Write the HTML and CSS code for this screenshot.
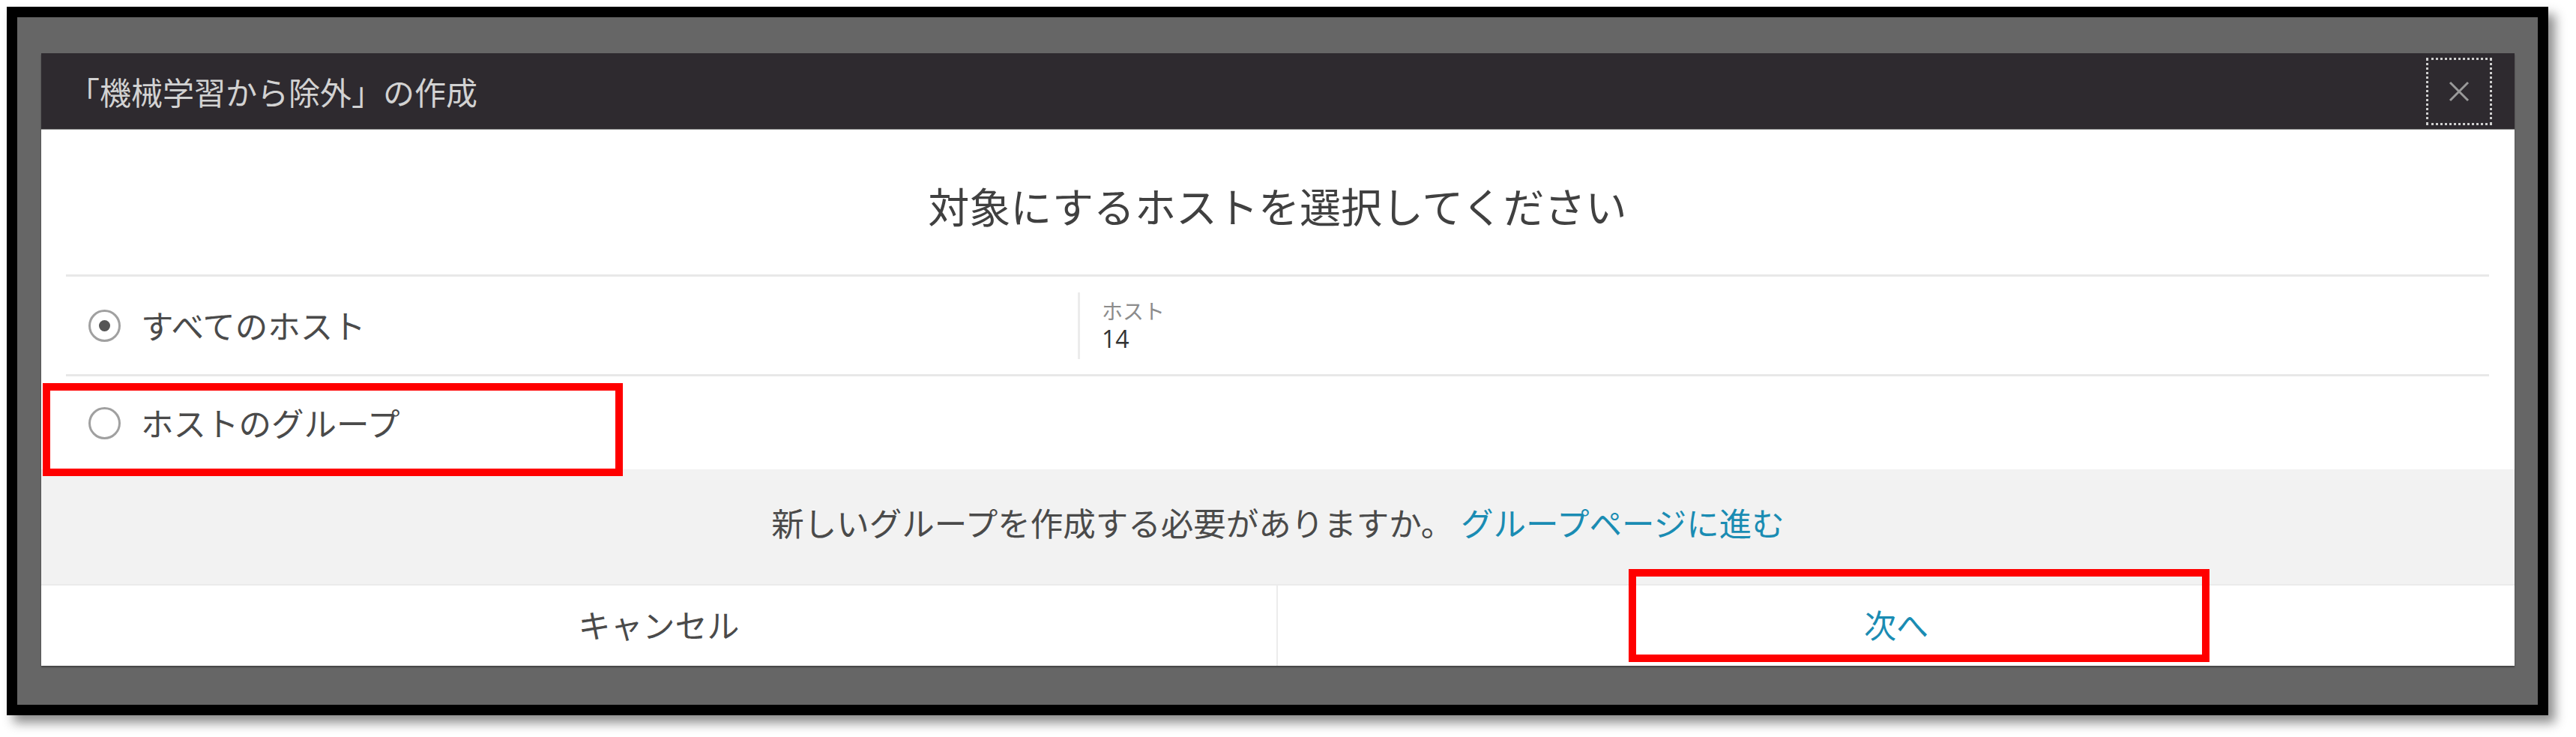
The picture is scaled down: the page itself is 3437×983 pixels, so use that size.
FILE: index.html
```html
<!DOCTYPE html>
<html lang="ja">
<head>
<meta charset="utf-8">
<title>「機械学習から除外」の作成</title>
<link rel="stylesheet" href="styles.css">
</head>
<body>
<div class="frame">
  <div class="dialog">
    <div class="header">
      <span class="title">「機械学習から除外」の作成</span>
      <button class="close" aria-label="閉じる">
        <svg width="30" height="30" viewBox="0 0 30 30"><path d="M3 3 L27 27 M27 3 L3 27" stroke="#9a9a9a" stroke-width="3" fill="none"/></svg>
      </button>
    </div>
    <div class="content">
      <div class="heading">対象にするホストを選択してください</div>
      <div class="options">
        <div class="option row-first">
          <div class="choice"><span class="radio checked"></span><span class="label">すべてのホスト</span></div>
          <div class="stat">
            <span class="stat-label">ホスト</span>
            <span class="stat-value">14</span>
          </div>
        </div>
        <div class="option">
          <div class="choice"><span class="radio"></span><span class="label">ホストのグループ</span></div>
        </div>
      </div>
    </div>
    <div class="notice">新しいグループを作成する必要がありますか。 <a class="link" href="#">グループページに進む</a></div>
    <div class="footer">
      <button class="btn cancel">キャンセル</button>
      <button class="btn next">次へ</button>
    </div>
  </div>
</div>
<div class="mark mark-group"></div>
<div class="mark mark-next"></div>
</body>
</html>
```
FILE: styles.css
```css
html, body {
  margin: 0;
  padding: 0;
  background: #ffffff;
}
body {
  position: relative;
  width: 3437px;
  height: 983px;
  overflow: hidden;
  font-family: "Noto Sans CJK JP", "Noto Sans", sans-serif;
}
.frame {
  box-sizing: border-box;
  margin: 9px 0 0 9px;
  width: 3391px;
  height: 945px;
  border: 14px solid #000;
  background: #666666;
  padding: 48px 31px 52px 32px;
  box-shadow: 9px 10px 14px rgba(0,0,0,0.45);
}
.dialog {
  width: 3300px;
  height: 817px;
  display: flex;
  flex-direction: column;
  background: #ffffff;
  box-shadow: 0 2px 2px rgba(0,0,0,0.35);
}
.header {
  height: 101px;
  flex: none;
  display: flex;
  align-items: center;
  justify-content: space-between;
  background: #2e2a2f;
  border-bottom: 1px solid #8a8a8a;
  padding-left: 36px;
  padding-right: 30px;
}
.title {
  color: #d2d2d2;
  font-size: 42px;
  line-height: 1;
}
.close {
  width: 88px;
  height: 90px;
  box-sizing: border-box;
  border: 3px dotted #cfcfcf;
  background: transparent;
  display: flex;
  align-items: center;
  justify-content: center;
  padding: 0;
  margin-top: 1px;
}
.content {
  flex: none;
  padding: 0 34px 0 33px;
}
.heading {
  height: 196px;
  display: flex;
  align-items: center;
  justify-content: center;
  font-size: 55px;
  color: #404040;
  border-bottom: 3px solid #e8e8e8;
  padding-top: 6px;
  box-sizing: border-box;
}
.option {
  display: grid;
  grid-template-columns: 1350px 1fr;
  align-items: center;
  height: 124px;
}
.row-first {
  height: 130px;
  border-bottom: 3px solid #e8e8e8;
}
.choice {
  display: flex;
  align-items: center;
  padding-left: 30px;
}
.radio {
  box-sizing: border-box;
  width: 43px;
  height: 43px;
  border: 3px solid #a0a0a0;
  border-radius: 50%;
  display: flex;
  align-items: center;
  justify-content: center;
  margin-right: 27px;
}
.radio.checked::after {
  content: "";
  width: 15px;
  height: 15px;
  border-radius: 50%;
  background: #555;
}
.label {
  font-size: 43.5px;
  color: #4a4a4a;
  line-height: 1;
}
.stat {
  display: flex;
  flex-direction: column;
  justify-content: center;
  height: 89px;
  border-left: 3px solid #ececec;
  padding-left: 29px;
  box-sizing: border-box;
}
.stat-label {
  font-size: 28px;
  color: #8c8c8c;
  line-height: 36px;
}
.stat-value {
  font-family: "Open Sans", "Noto Sans", sans-serif;
  font-size: 32px;
  color: #333;
  line-height: 40px;
}
.notice {
  flex: none;
  height: 153px;
  box-sizing: border-box;
  background: #f2f2f2;
  display: flex;
  align-items: center;
  justify-content: center;
  font-size: 43.5px;
  color: #4a4a4a;
  white-space: pre;
  padding-bottom: 12px;
}
.link {
  color: #1a8cb3;
  text-decoration: none;
}
.footer {
  flex: 1;
  display: grid;
  grid-template-columns: 1fr 1fr;
  border-top: 2px solid #ebebeb;
}
.btn {
  border: none;
  background: #ffffff;
  font-family: "Noto Sans CJK JP", "Noto Sans", sans-serif;
  font-size: 43px;
  padding: 0 0 6px;
  margin: 0;
}
.cancel {
  color: #4a4a4a;
  border-right: 2px solid #ececec;
}
.next {
  color: #1a8cb3;
}
.mark {
  position: absolute;
  box-sizing: border-box;
  border: 10px solid #ff0000;
}
.mark-group {
  left: 57px;
  top: 511px;
  width: 774px;
  height: 124px;
}
.mark-next {
  left: 2173px;
  top: 759px;
  width: 775px;
  height: 124px;
}
```
